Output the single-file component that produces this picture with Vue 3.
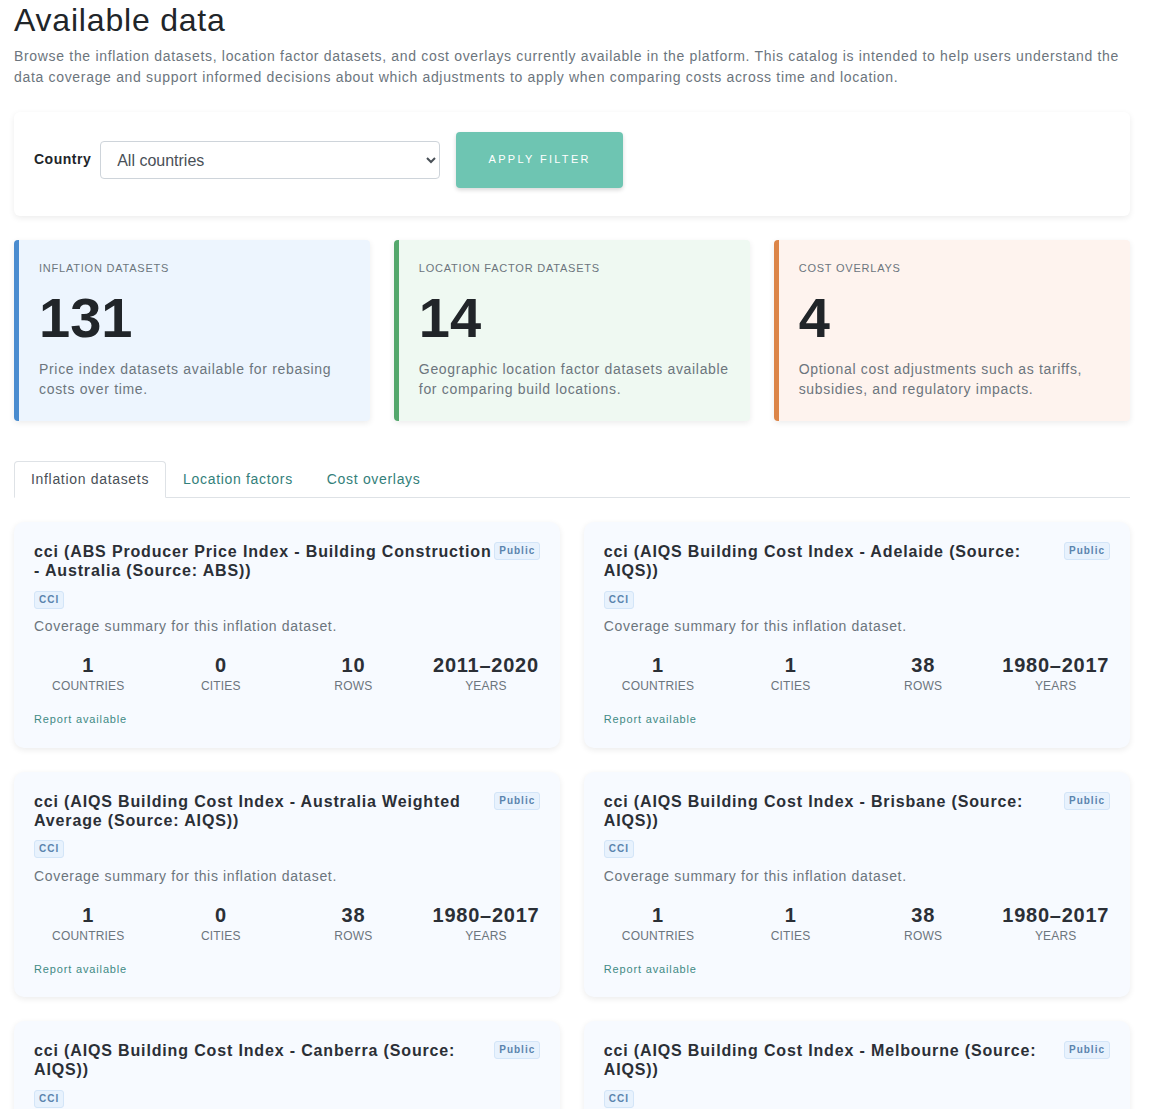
<script setup>
import { ref } from 'vue'

const activeTab = ref('inflation')

const tabs = [
  { id: 'inflation', label: 'Inflation datasets' },
  { id: 'location', label: 'Location factors' },
  { id: 'overlays', label: 'Cost overlays' },
]

const summaries = [
  { kind: 'blue', label: 'INFLATION DATASETS', value: 131, text: 'Price index datasets available for rebasing costs over time.' },
  { kind: 'green', label: 'LOCATION FACTOR DATASETS', value: 14, text: 'Geographic location factor datasets available for comparing build locations.' },
  { kind: 'orange', label: 'COST OVERLAYS', value: 4, text: 'Optional cost adjustments such as tariffs, subsidies, and regulatory impacts.' },
]

const datasets = [
  { title: 'cci (ABS Producer Price Index - Building Construction - Australia (Source: ABS))', countries: 1, cities: 0, rows: 10, years: '2011–2020' },
  { title: 'cci (AIQS Building Cost Index - Adelaide (Source: AIQS))', countries: 1, cities: 1, rows: 38, years: '1980–2017' },
  { title: 'cci (AIQS Building Cost Index - Australia Weighted Average (Source: AIQS))', countries: 1, cities: 0, rows: 38, years: '1980–2017' },
  { title: 'cci (AIQS Building Cost Index - Brisbane (Source: AIQS))', countries: 1, cities: 1, rows: 38, years: '1980–2017' },
  { title: 'cci (AIQS Building Cost Index - Canberra (Source: AIQS))', countries: 1, cities: 1, rows: 38, years: '1980–2017' },
  { title: 'cci (AIQS Building Cost Index - Melbourne (Source: AIQS))', countries: 1, cities: 1, rows: 38, years: '1980–2017' },
]
</script>

<template>
  <div class="page">
    <h1 class="title">Available data</h1>
    <p class="intro">
      Browse the inflation datasets, location factor datasets, and cost overlays currently available in the platform. This catalog is intended to help users understand the data coverage and support informed decisions about which adjustments to apply when comparing costs across time and location.
    </p>

    <div class="filter-card">
      <label class="filter-label" for="country">Country</label>
      <select id="country" class="filter-select">
        <option>All countries</option>
      </select>
      <button class="filter-btn">APPLY FILTER</button>
    </div>

    <div class="summary-row">
      <div v-for="s in summaries" :key="s.label" :class="['summary-card', s.kind]">
        <div class="summary-label">{{ s.label }}</div>
        <div class="summary-value">{{ s.value }}</div>
        <div class="summary-text">{{ s.text }}</div>
      </div>
    </div>

    <div class="tabs">
      <button
        v-for="t in tabs"
        :key="t.id"
        :class="['tab', { active: activeTab === t.id }]"
        @click="activeTab = t.id">
        {{ t.label }}
      </button>
    </div>

    <div class="dataset-grid">
      <div v-for="d in datasets" :key="d.title" class="dataset-card">
        <div class="dataset-head">
          <div class="dataset-title">{{ d.title }}</div>
          <span class="badge">Public</span>
        </div>
        <div class="dataset-tags"><span class="badge">CCI</span></div>
        <div class="dataset-desc">Coverage summary for this inflation dataset.</div>
        <div class="dataset-stats">
          <div class="stat">
            <div class="stat-value">{{ d.countries }}</div>
            <div class="stat-label">COUNTRIES</div>
          </div>
          <div class="stat">
            <div class="stat-value">{{ d.cities }}</div>
            <div class="stat-label">CITIES</div>
          </div>
          <div class="stat">
            <div class="stat-value">{{ d.rows }}</div>
            <div class="stat-label">ROWS</div>
          </div>
          <div class="stat">
            <div class="stat-value">{{ d.years }}</div>
            <div class="stat-label">YEARS</div>
          </div>
        </div>
        <div class="dataset-report">Report available</div>
      </div>
    </div>
  </div>
</template>

<style>
html, body {
  margin: 0;
  background: #fff;
  overflow: hidden;
}
</style>

<style scoped>
.page {
  box-sizing: border-box;
  height: 1109px;
  overflow: hidden;
  padding: 0 31px 0 14px;
  font-family: "Liberation Sans", Arial, sans-serif;
  color: #212529;
}

.title {
  margin: 0;
  font-size: 32px;
  font-weight: 400;
  line-height: 40px;
  letter-spacing: 0.8px;
  color: #212529;
}

.intro {
  margin: 6px 0 0;
  font-size: 14px;
  line-height: 21px;
  letter-spacing: 0.68px;
  color: #6c757d;
}

.filter-card {
  display: flex;
  align-items: center;
  gap: 9px;
  margin-top: 24px;
  padding: 20px 20px 28px;
  height: 104px;
  box-sizing: border-box;
  background: #fff;
  border-radius: 6px;
  box-shadow: 0 2px 6px rgba(0, 0, 0, 0.08);
}

.filter-label {
  margin-bottom: 2px;
  font-size: 14px;
  font-weight: 700;
  letter-spacing: 0.5px;
  color: #212529;
}

.filter-select {
  width: 340px;
  height: 38px;
  padding: 0 12px;
  font-family: inherit;
  font-size: 16px;
  color: #495057;
  background: #fff;
  border: 1px solid #ced4da;
  border-radius: 4px;
}

.filter-btn {
  margin-left: 7px;
  width: 167px;
  height: 56px;
  padding: 0 0 2px;
  border: none;
  border-radius: 4px;
  background: #6ec5b2;
  color: #fff;
  font-family: inherit;
  font-size: 11px;
  font-weight: 400;
  letter-spacing: 2.3px;
  box-shadow: 0 2px 4px rgba(0, 0, 0, 0.16);
  cursor: pointer;
}

.summary-row {
  display: grid;
  grid-template-columns: repeat(3, 1fr);
  gap: 23.5px;
  margin-top: 24px;
}

.summary-card {
  box-sizing: border-box;
  height: 181px;
  padding: 21px 20px 0;
  border-left: 5px solid;
  border-radius: 4px;
  box-shadow: 0 2px 6px rgba(0, 0, 0, 0.08);
}

.summary-card.blue {
  background: #edf5fe;
  border-left-color: #4a8ccf;
}

.summary-card.green {
  background: #eff9f2;
  border-left-color: #55a86d;
}

.summary-card.orange {
  background: #fef3ee;
  border-left-color: #dc8548;
}

.summary-label {
  font-size: 11px;
  line-height: 14px;
  letter-spacing: 0.78px;
  color: #6c757d;
}

.summary-value {
  margin-top: 11px;
  font-size: 56px;
  font-weight: 700;
  line-height: 64px;
  letter-spacing: 0;
  color: #212529;
}

.summary-text {
  margin-top: 9px;
  font-size: 14px;
  line-height: 20px;
  letter-spacing: 0.68px;
  color: #6c757d;
}

.tabs {
  display: flex;
  margin-top: 40px;
  height: 36px;
  border-bottom: 1px solid #dee2e6;
}

.tab {
  height: 37px;
  padding: 0 16px 2px;
  border: 1px solid transparent;
  border-radius: 4px 4px 0 0;
  background: transparent;
  font-family: inherit;
  font-size: 14px;
  letter-spacing: 0.68px;
  color: #33807a;
  cursor: pointer;
}

.tab.active {
  color: #495057;
  background: #fff;
  border-color: #dee2e6 #dee2e6 #fff;
}

.dataset-grid {
  display: grid;
  grid-template-columns: repeat(2, 1fr);
  column-gap: 23.5px;
  row-gap: 24px;
  margin-top: 24px;
}

.dataset-card {
  box-sizing: border-box;
  height: 225.6px;
  padding: 20px;
  background: #f7faff;
  border-radius: 10px;
  box-shadow: 0 2px 6px rgba(0, 0, 0, 0.08);
}

.dataset-head {
  display: flex;
  justify-content: space-between;
  align-items: flex-start;
  gap: 2px;
}

.dataset-title {
  font-size: 16px;
  font-weight: 700;
  line-height: 19px;
  letter-spacing: 0.85px;
  color: #2b2f36;
}

.badge {
  flex: none;
  display: inline-block;
  padding: 2px 4px;
  font-size: 10px;
  font-weight: 700;
  line-height: 12px;
  letter-spacing: 1px;
  color: #5b84ad;
  background: #e8f2fd;
  border: 1px solid #d3e5f8;
  border-radius: 3px;
}

.dataset-tags {
  margin-top: 8.5px;
  height: 17px;
}

.dataset-desc {
  margin-top: 10.5px;
  font-size: 14px;
  line-height: 20px;
  letter-spacing: 0.66px;
  color: #6c757d;
}

.dataset-stats {
  display: grid;
  grid-template-columns: repeat(4, 1fr);
  column-gap: 24px;
  margin-top: 17px;
  text-align: center;
}

.stat-value {
  font-size: 20px;
  font-weight: 700;
  line-height: 24px;
  letter-spacing: 0.75px;
  color: #2b2f36;
}

.stat-label {
  margin-top: 1px;
  font-size: 12px;
  line-height: 16px;
  letter-spacing: 0.2px;
  color: #6c757d;
}

.dataset-report {
  margin-top: 18px;
  font-size: 11px;
  line-height: 14px;
  letter-spacing: 0.85px;
  color: #3f8a85;
}
</style>
